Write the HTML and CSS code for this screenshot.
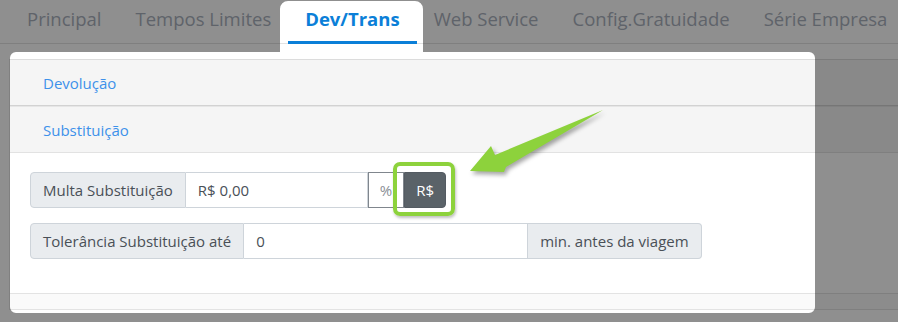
FILE: index.html
```html
<!DOCTYPE html>
<html lang="pt-BR">
<head>
    <meta charset="UTF-8">
    <meta name="viewport" content="width=device-width, initial-scale=1.0">
    <title>Dev/Trans</title>
    <link rel="stylesheet" href="styles.css">
</head>
<body>
    <ul class="tabs">
        <li><a href="#">Principal</a></li>
        <li><a href="#">Tempos Limites</a></li>
        <li><a href="#" class="active">Dev/Trans</a></li>
        <li><a href="#">Web Service</a></li>
        <li><a href="#">Config.Gratuidade</a></li>
        <li><a href="#">Série Empresa</a></li>
    </ul>

    <div class="content">
        <div class="accordion">
            <div class="acc-header first"><a href="#">Devolução</a></div>
            <div class="acc-header"><a href="#">Substituição</a></div>
            <div class="acc-body">
                <div class="input-group">
                    <span class="addon">Multa Substituição</span>
                    <input type="text" class="field field-multa" value="R$ 0,00">
                    <button type="button" class="toggle">%</button>
                    <button type="button" class="toggle on">R$</button>
                </div>
                <div class="input-group">
                    <span class="addon">Tolerância Substituição até</span>
                    <input type="text" class="field field-tol" value="0">
                    <span class="addon addon-right">min. antes da viagem</span>
                </div>
            </div>
            <div class="acc-footer"></div>
        </div>
    </div>

    <!-- tour overlay -->
    <div class="overlay"></div>
    <div class="highlight"></div>
    <svg class="arrow" width="150" height="80" viewBox="460 100 150 80">
        <polygon points="470,171 491,146 495,155 603,110 506,167 504,172" fill="#8dd23c"/>
    </svg>
</body>
</html>
```

FILE: styles.css
```css
body {
    font-family: "Open Sans", Arial, sans-serif;
    margin: 0;
    padding: 0;
    width: 898px;
    height: 322px;
    overflow: hidden;
    background-color: white;
    position: relative;
}

.tabs {
    list-style: none;
    margin: 0;
    padding: 0 0 0 10px;
    display: flex;
    border-bottom: 1px solid #e2e2e2;
}

.tabs li {
    margin-bottom: -1px;
}

.tabs a {
    display: block;
    padding: 7px 17px 10px;
    line-height: 24px;
    font-size: 18.5px;
    color: #aab1bd;
    text-decoration: none;
    white-space: nowrap;
    border-bottom: 3px solid transparent;
}

.tabs a.active {
    color: #0b7fd8;
    font-weight: bold;
    border-bottom-color: #0b7fd8;
}

.content {
    padding: 15px 0 0 9px;
}

.accordion {
    border-top: 1px solid #dcdcdc;
    border-left: 1px solid #e4e4e4;
}

.acc-header {
    height: 45px;
    display: flex;
    align-items: center;
    padding-left: 33px;
    background-color: #f5f5f5;
    border-bottom: 1px solid #e2e2e2;
}

.acc-header.first {
    border-bottom: 1px solid #d2d2d2;
    box-shadow: 0 1px 0 #e6e6e6;
    margin-bottom: 1px;
}

.acc-header a {
    font-size: 15px;
    color: #3d91ea;
    text-decoration: none;
}

.acc-body {
    height: 140px;
    box-sizing: border-box;
    padding: 19px 0 0 20px;
    background-color: white;
}

.input-group {
    display: flex;
    height: 36px;
    margin-bottom: 15px;
}

.addon {
    padding: 0 12px;
    line-height: 34px;
    font-size: 15px;
    color: #495057;
    background-color: #e9ecef;
    border: 1px solid #ced4da;
    border-radius: 4px 0 0 4px;
    white-space: nowrap;
}

.addon-right {
    border-left: 0;
    border-radius: 0 4px 4px 0;
}

.field {
    box-sizing: border-box;
    height: 36px;
    padding: 0 12px;
    font-family: "Open Sans", Arial, sans-serif;
    font-size: 15px;
    color: #495057;
    border: 1px solid #ced4da;
    border-left: 0;
    outline: none;
}

.field-multa {
    width: 182px;
}

.field-tol {
    width: 284px;
}

.toggle {
    height: 36px;
    padding: 0 11px;
    font-family: "Open Sans", Arial, sans-serif;
    font-size: 15px;
    color: #8a9097;
    background-color: white;
    border: 1px solid #80868d;
    border-radius: 0;
}

.toggle.on {
    color: white;
    background-color: #5a6268;
    border-color: #545b62;
    border-radius: 0 4px 4px 0;
}

.acc-footer {
    height: 15px;
    background-color: #fafafa;
    border-top: 1px solid #e3e3e3;
    border-bottom: 1px solid #e3e3e3;
}

.overlay {
    position: absolute;
    left: 0;
    top: 0;
    width: 898px;
    height: 322px;
    background-color: rgba(0, 0, 0, 0.44);
    clip-path: path(evenodd, "M0 0H898V322H0Z M10 58A6 6 0 0 1 16 52H280V9A8 8 0 0 1 288 1H415A8 8 0 0 1 423 9V52H809A6 6 0 0 1 815 58V307A6 6 0 0 1 809 313H16A6 6 0 0 1 10 307Z");
}

.highlight {
    position: absolute;
    left: 393px;
    top: 162px;
    width: 62px;
    height: 54px;
    box-sizing: border-box;
    border: 4px solid #8dd23c;
    border-radius: 7px;
    box-shadow: 1px 2px 3px rgba(0, 0, 0, 0.25);
}

.arrow {
    position: absolute;
    left: 460px;
    top: 100px;
    filter: drop-shadow(2px 3px 2px rgba(0, 0, 0, 0.35));
}
```
